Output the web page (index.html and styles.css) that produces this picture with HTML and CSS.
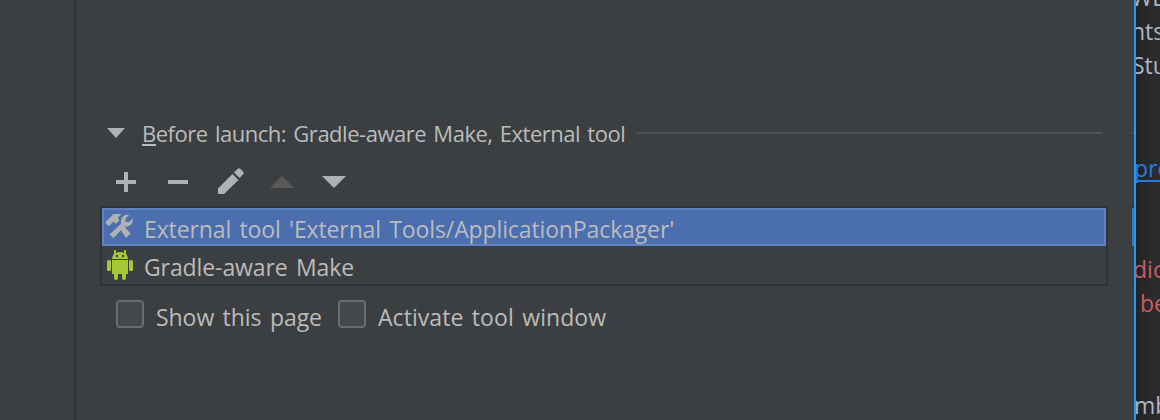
FILE: index.html
```html
<!DOCTYPE html>
<html lang="en">
<head>
<meta charset="utf-8">
<title>Run Configurations</title>
<link rel="stylesheet" href="styles.css">
</head>
<body>
<div class="window">
  <aside class="sidebar"></aside>
  <main class="panel">
    <header class="section-header">
      <svg class="toggle" width="18" height="10" viewBox="0 0 18 10"><path d="M0 0H18L9 10Z" fill="#afb1b3"/></svg>
      <h1 class="section-title"><span class="mnemonic">B</span>efore launch: Gradle-aware Make, External tool</h1>
      <span class="rule"></span>
    </header>
    <div class="toolbar">
      <svg width="28" height="28" viewBox="0 0 28 28"><path d="M4 12H12V4H16V12H24V16H16V24H12V16H4Z" fill="#afb1b3"/></svg>
      <svg width="28" height="28" viewBox="0 0 28 28"><path d="M4 12H24V16H4Z" fill="#afb1b3"/></svg>
      <svg width="28" height="28" viewBox="0 0 28 28"><path d="M2 20.500L16.500 6L22.500 12L8 26H2ZM18 4.500L21.500 1Q23 -.500 24.500 1L27 3.500Q28.500 5 27 6.500L23.700 10Z" fill="#afb1b3"/></svg>
      <svg width="28" height="28" viewBox="0 0 28 28"><path d="M2 20H26L14 8Z" fill="#5a5a5a"/></svg>
      <svg width="28" height="28" viewBox="0 0 28 28"><path d="M2 8H26L14 20Z" fill="#afb1b3"/></svg>
    </div>
    <div class="task-list">
      <div class="task selected">
        <svg class="task-icon" width="28" height="28" viewBox="0 0 28 28" fill="#afb1b3">
          <path d="M0 9.500L8.500 1H16.500L12.500 5L14.500 7L11 11L8.500 8.500L3.800 13.200Z"/>
          <path d="M15.500 16.500L19 13L25.500 20.500L21 25Z"/>
          <path d="M4.500 21.500L16.200 10.500Q15 5.500 18.500 3Q21 1 24 2L20.500 5.500V9H24L27.500 5.500Q28.500 9 25.500 12Q23 14.300 19.500 13.500L8.500 25Z"/>
        </svg>
        <span class="task-label label-external">External tool 'External Tools/ApplicationPackager'</span>
      </div>
      <div class="task">
        <svg class="task-icon" width="28" height="32" viewBox="0 0 28 32" fill="#a4c639">
          <path fill-rule="evenodd" d="M8 1H10V4Q14 2 18 4V1H20V5Q22 7 22 10H6Q6 7 8 5ZM10 6V8H12V6ZM16 6V8H18V6Z"/>
          <path d="M6 11H22V25H20V29Q20 31 18 31Q16 31 16 29V25H12V29Q12 31 10 31Q8 31 8 29V25H6Z"/>
          <rect x="1" y="11" width="4" height="11" rx="1.500"/><rect x="23" y="11" width="4" height="11" rx="1.500"/>
        </svg>
        <span class="task-label label-make">Gradle-aware Make</span>
      </div>
    </div>
    <div class="options">
      <label class="option"><span class="box"></span><span class="label-show">Show this page</span></label>
      <label class="option"><span class="box"></span><span class="label-activate">Activate tool window</span></label>
    </div>
  </main>
  <div class="edge">
    <span class="edge-rule"></span>
    <span class="edge-list"><span class="edge-selected"></span></span>
  </div>
  <aside class="editor">
    <div class="line l1">WL</div>
    <div class="line l2">nts</div>
    <div class="line l3">Stu</div>
    <div class="line l4"><span class="link">&nbsp;pro</span></div>
    <div class="line l5">dic</div>
    <div class="line l6">be</div>
    <div class="line l7">mb</div>
  </aside>
</div>
</body>
</html>
```
FILE: styles.css
```css
* { box-sizing: border-box; }
body {
  margin: 0;
  background: #3c3f41;
  color: #bbbbbb;
  font-family: "Open Sans", "Noto Sans", sans-serif;
  font-size: 23px;
  overflow: hidden;
}
svg { display: block; flex: none; }
.window { display: flex; width: 1160px; height: 420px; overflow: hidden; }
.sidebar { width: 76px; flex: none; border-right: 2px solid #323232; }
.panel { width: 1032px; flex: none; padding: 118px 0 0 24px; }
.section-header { display: flex; align-items: center; height: 30px; padding: 0 6px 0 7px; }
.toggle { margin-right: 17px; }
.section-title {
  margin: 0;
  width: 494px;
  flex: none;
  font-size: 22px;
  font-weight: 400;
  line-height: 30px;
  letter-spacing: -0.48px;
  word-spacing: 2px;
  white-space: nowrap;
}
.mnemonic { border-bottom: 2px solid #bbbbbb; display: inline-block; height: 28px; line-height: 30px; vertical-align: top; }
.rule { flex: 1; height: 2px; background: #515151; }
.toolbar { display: flex; gap: 24px; height: 58px; padding: 20px 0 0 12px; }
.task-list { height: 80px; border: 2px solid #323232; }
.task { display: flex; height: 38px; padding: 2px 0 0 4px; white-space: nowrap; }
.selected { background: #4b6eaf; border: 2px solid #6182c1; padding: 0 0 0 1px; }
.task-icon { margin-top: 1px; }
.selected .task-icon { margin-top: 3px; }
.task-label { margin-left: 10px; line-height: 38px; }
.selected .task-label { margin-left: 11px; }
.label-external { letter-spacing: -0.12px; word-spacing: 2.5px; }
.label-make { letter-spacing: -0.1px; word-spacing: 2.5px; }
.label-show { letter-spacing: -0.05px; word-spacing: 2.5px; }
.label-activate { letter-spacing: 0.05px; word-spacing: 2.5px; }
.options { display: flex; padding: 14px 0 0 16px; }
.option { display: flex; width: 222px; white-space: nowrap; line-height: 35px; }
.box { width: 28px; height: 28px; margin-right: 12px; flex: none; border: 2px solid #6b6b6b; border-radius: 4px; background: #43494a; }
.edge { width: 28px; flex: none; border-right: 2px solid #1a9ff5; padding-top: 132px; display: flex; flex-direction: column; align-items: flex-end; }
.edge-rule { width: 2px; height: 2px; background: #515151; }
.edge-list { width: 2px; height: 80px; margin-top: 72px; border: solid #323232; border-width: 2px 0; }
.edge-selected { display: block; height: 38px; background: #4b6eaf; }
.editor { width: 24px; flex: none; overflow: hidden; background: linear-gradient(90deg, #232323, #2b2b2b 16px); color: #a9b7c6; white-space: nowrap; }
.line { height: 34px; line-height: 34px; font-size: 23px; }
.l1 { margin-top: -20px; text-indent: -5px; }
.l2 { text-indent: -5px; }
.l3 { text-indent: -4px; }
.l4 { margin-top: 68px; text-indent: -4px; padding-top: 1px; }
.link { color: #287bde; border-bottom: 2px solid #287bde; display: inline-block; height: 31px; }
.l5 { margin-top: 68px; text-indent: -3px; color: #c75f66; }
.l6 { text-indent: 4px; color: #c75f66; }
.l7 { margin-top: 68px; text-indent: -2px; }
```
